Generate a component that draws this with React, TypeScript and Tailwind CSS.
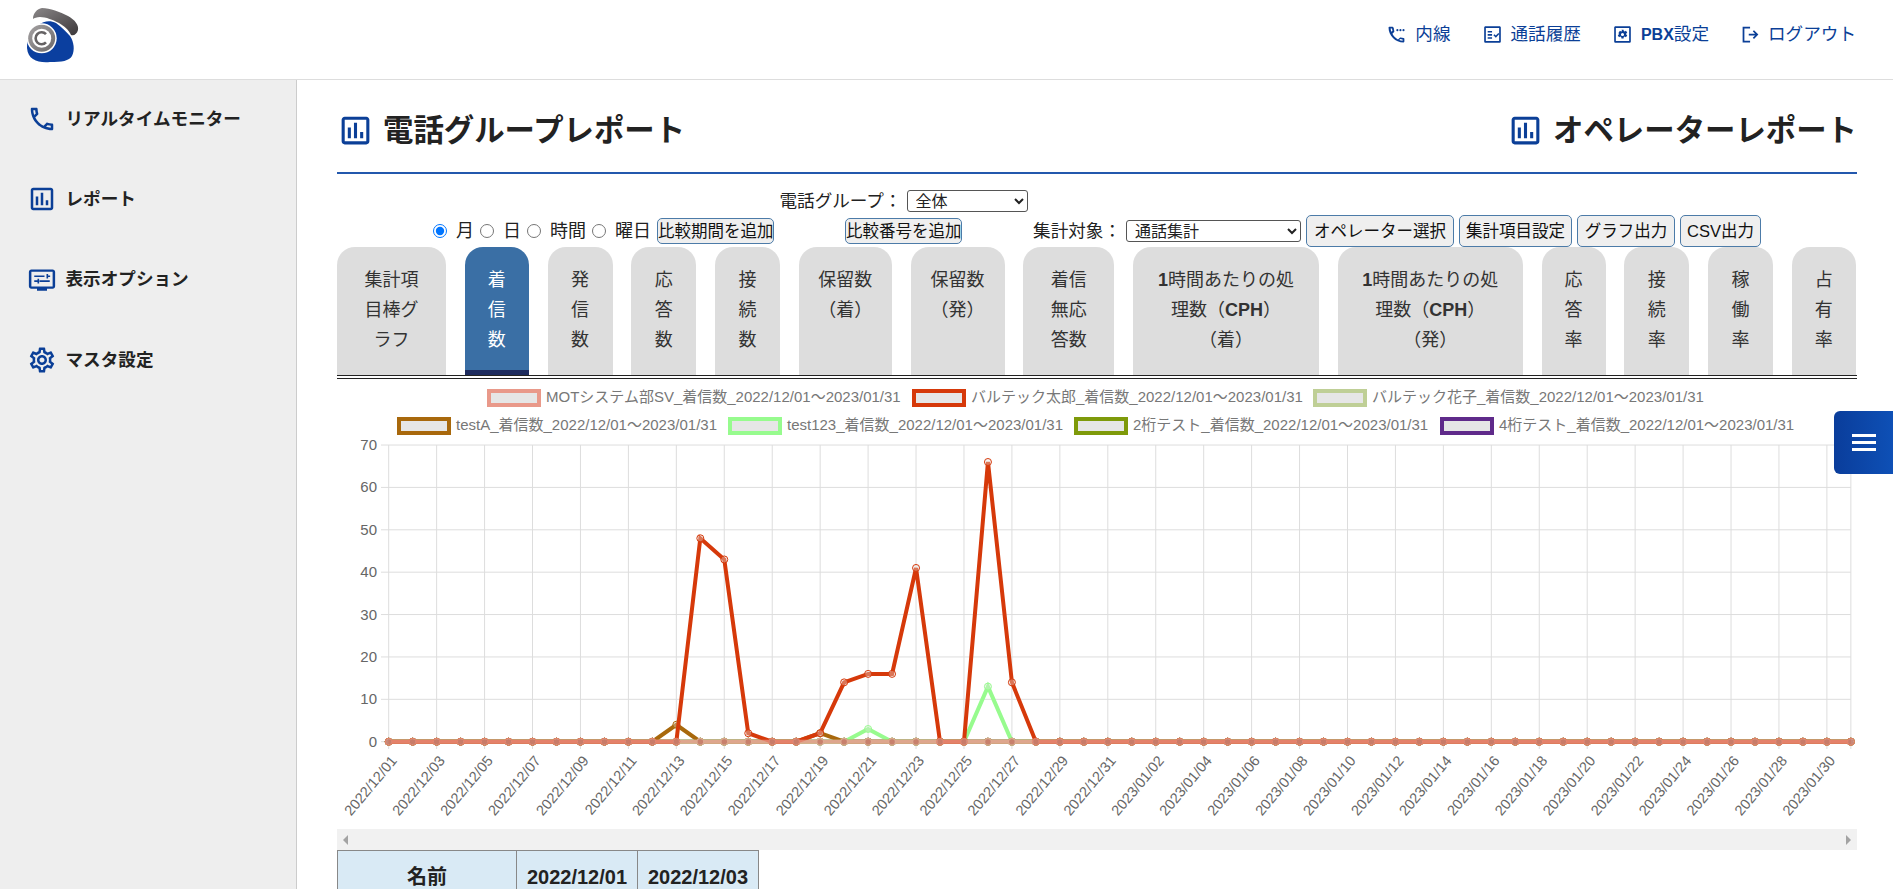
import { ReactNode } from "react";

const BLUE = "#0b3f97";

function Svg({ size, children }: { size: number; children: ReactNode }) {
    return (
        <svg width={size} height={size} viewBox="0 0 24 24" fill={BLUE} className="shrink-0">
            {children}
        </svg>
    );
}

function CallIcon({ size = 30 }: { size?: number }) {
    return (
        <Svg size={size}>
            <path d="M6.54 5c.06.89.21 1.76.45 2.59l-1.2 1.2c-.41-1.2-.67-2.47-.76-3.79h1.51m9.86 12.02c.85.24 1.72.39 2.6.45v1.49c-1.32-.09-2.59-.35-3.8-.75l1.2-1.19M7.5 3H4c-.55 0-1 .45-1 1 0 9.39 7.61 17 17 17 .55 0 1-.45 1-1v-3.49c0-.55-.45-1-1-1-1.24 0-2.45-.2-3.57-.57-.1-.04-.21-.05-.31-.05-.26 0-.51.1-.71.29l-2.2 2.2c-2.83-1.45-5.15-3.76-6.59-6.59l2.2-2.2c.28-.28.36-.67.25-1.02C8.7 6.45 8.5 5.25 8.5 4c0-.55-.45-1-1-1z" />
        </Svg>
    );
}

function ReportIcon({ size = 30 }: { size?: number }) {
    return (
        <Svg size={size}>
            <path d="M19 3H5c-1.1 0-2 .9-2 2v14c0 1.1.9 2 2 2h14c1.1 0 2-.9 2-2V5c0-1.1-.9-2-2-2zm0 16H5V5h14v14z" />
            <path d="M7 10h2v7H7zm4-3h2v10h-2zm4 6h2v4h-2z" />
        </Svg>
    );
}

function DisplayIcon() {
    return (
        <Svg size={30}>
            <path d="M3.500 3.500h17c1.100 0 2 .9 2 2v11.500c0 1.100-.9 2-2 2H16v1.500H8V19H3.500c-1.100 0-2-.9-2-2V5.500c0-1.100.9-2 2-2zm0 1.900v11.700h17V5.400z" />
            <path d="M5.800 8.300h8.200v1.300H5.800zm9.800-1.200h1.300v1.200h1.600v1.300h-1.600v1.200h-1.300zM18.200 12.200v1.300H10v-1.300zM8.400 11h1.300v3.700H8.400v-1.200H5.800v-1.300h2.600z" />
        </Svg>
    );
}

function GearIcon() {
    return (
        <Svg size={30}>
            <path d="M19.43 12.98c.04-.32.07-.64.07-.98 0-.34-.03-.66-.07-.98l2.11-1.65c.19-.15.24-.42.12-.64l-2-3.46c-.09-.16-.26-.25-.44-.25-.06 0-.12.01-.17.03l-2.49 1c-.52-.4-1.08-.73-1.69-.98l-.38-2.65C14.46 2.18 14.25 2 14 2h-4c-.25 0-.46.18-.49.42l-.38 2.65c-.61.25-1.17.59-1.69.98l-2.49-1c-.06-.02-.12-.03-.18-.03-.17 0-.34.09-.43.25l-2 3.46c-.13.22-.07.49.12.64l2.11 1.65c-.04.32-.07.65-.07.98 0 .33.03.66.07.98l-2.11 1.65c-.19.15-.24.42-.12.64l2 3.46c.09.16.26.25.44.25.06 0 .12-.01.17-.03l2.49-1c.52.4 1.08.73 1.69.98l.38 2.65c.03.24.24.42.49.42h4c.25 0 .46-.18.49-.42l.38-2.65c.61-.25 1.17-.59 1.69-.98l2.49 1c.06.02.12.03.18.03.17 0 .34-.09.43-.25l2-3.46c.12-.22.07-.49-.12-.64l-2.11-1.65zm-1.98-1.71c.04.31.05.52.05.73 0 .21-.02.43-.05.73l-.14 1.13.89.7 1.08.84-.7 1.21-1.27-.51-1.04-.42-.9.68c-.43.32-.84.56-1.25.73l-1.06.43-.16 1.13-.2 1.35h-1.4l-.19-1.35-.16-1.13-1.06-.43c-.43-.18-.83-.41-1.23-.71l-.91-.7-1.06.43-1.27.51-.7-1.21 1.08-.84.89-.7-.14-1.13c-.03-.31-.05-.54-.05-.74s.02-.43.05-.73l.14-1.13-.89-.7-1.08-.84.7-1.21 1.27.51 1.04.42.9-.68c.43-.32.84-.56 1.25-.73l1.06-.43.16-1.13.2-1.35h1.39l.19 1.35.16 1.13 1.06.43c.43.18.83.41 1.23.71l.91.7 1.06-.43 1.27-.51.7 1.21-1.07.85-.89.7.14 1.13zM12 8c-2.21 0-4 1.79-4 4s1.79 4 4 4 4-1.79 4-4-1.79-4-4-4zm0 6c-1.1 0-2-.9-2-2s.9-2 2-2 2 .9 2 2-.9 2-2 2z" />
        </Svg>
    );
}

function LineIcon() {
    return (
        <Svg size={21}>
            <path d="M6.9 3H3.8c-.5 0-.9.4-.9.9C2.900 13.300 10.700 21 20.100 21c.5 0 .9-.4.9-.9v-3.300c0-.5-.4-.9-.9-.9-1.200 0-2.300-.2-3.400-.5-.3-.1-.7 0-.9.2l-2.100 2.100C11 16.100 8.700 13.800 7.300 11.100l2-2.100c.3-.3.3-.6.2-.9C9.100 7 8.900 5.900 8.900 4.700 8.900 3.700 7.900 3 6.900 3zM5.300 5h1.600c.1 1 .2 1.900.5 2.700L6.200 8.900C5.700 7.700 5.400 6.400 5.300 5zm11 12.100c.9.300 1.800.4 2.700.5v1.600c-1.400-.1-2.700-.4-3.900-.8z" />
            <circle cx="13" cy="7" r="1.200" />
            <circle cx="16.500" cy="7" r="1.200" />
            <circle cx="20" cy="7" r="1.200" />
        </Svg>
    );
}

function HistoryIcon() {
    return (
        <Svg size={21}>
            <path d="M4 2.500h16c.8 0 1.500.7 1.500 1.500v16c0 .8-.7 1.500-1.500 1.500H4c-.8 0-1.500-.7-1.500-1.500V4c0-.8.7-1.500 1.500-1.500zm.4 2v15h15.200v-15z" />
            <path d="M6.500 8h5v1.800h-5zm0 3.500h5v1.800h-5zm0 3.500h5v1.800h-5z" />
            <path d="M13 12.800l1.200-1.200 1.600 1.600 2.800-3 1.200 1.200-4 4.200z" />
        </Svg>
    );
}

function PbxIcon() {
    return (
        <Svg size={21}>
            <path d="M4 2.500h16c.8 0 1.500.7 1.500 1.500v16c0 .8-.7 1.500-1.500 1.500H4c-.8 0-1.500-.7-1.500-1.500V4c0-.8.7-1.500 1.500-1.500zm.4 2v15h15.200v-15z" />
            <path fillRule="evenodd" d="M10.800 6.500h2.400l.3 1.500 1.100.5 1.300-.8 1.500 2-1.100 1.100v1.300l1.100 1.100-1.500 2-1.300-.8-1.100.5-.3 1.600h-2.400l-.3-1.600-1.100-.5-1.300.8-1.500-2 1.100-1.100v-1.300L7.600 9.700l1.500-2 1.300.8 1.100-.5zM12 10.200a1.800 1.800 0 100 3.600 1.800 1.800 0 000-3.600z" />
        </Svg>
    );
}

function LogoutIcon() {
    return (
        <Svg size={21}>
            <path d="M3 3h8.500v2H5v14h6.500v2H3z" />
            <path d="M10 11h7.200l-2.600-2.600L16 7l5 5-5 5-1.400-1.400 2.600-2.600H10z" />
        </Svg>
    );
}

function Logo() {
    return (
        <svg width="54" height="56" viewBox="25 8 54 56" className="shrink-0 self-start mt-[8px]">
            <defs>
                <linearGradient id="handset" x1="0" y1="0" x2="1" y2="1">
                    <stop offset="0" stopColor="#8a8788" />
                    <stop offset="1" stopColor="#3c383a" />
                </linearGradient>
                <linearGradient id="ring" x1="0" y1="0" x2="1" y2="1">
                    <stop offset="0" stopColor="#a5a2a3" />
                    <stop offset="1" stopColor="#6b6869" />
                </linearGradient>
            </defs>
            <path d="M27 48C27 38 31 30 38 25C44 21 50 20 56 23C62 27 66 32 70 36C74 42 75 50 72 56C69 61 62 62 50 62C38 63 28 60 27 48Z" fill="#0b3f9f" />
            <path d="M33 19C33 13 37 9 42 8C50 8 60 12 68 16C75 20 79 25 78 30C77 34 74 36 71 35C69 30 64 26 59 23C53 20 46 17 40 17C37 17 34 18 33 19Z" fill="url(#handset)" />
            <circle cx="41.700" cy="38.300" r="15" fill="#fff" />
            <circle cx="41.700" cy="38.300" r="13.500" fill="url(#ring)" />
            <circle cx="41.700" cy="38.300" r="9.500" fill="#fff" />
            <path d="M46 34.200a6 6 0 100 8.200" fill="none" stroke="#656263" strokeWidth="2.600" />
        </svg>
    );
}

const headerLinks = [
    { icon: <LineIcon />, label: <>内線</>, gap: "gap-[8px]" },
    { icon: <HistoryIcon />, label: <>通話履歴</>, gap: "gap-[8px]" },
    { icon: <PbxIcon />, label: <><span className="font-bold text-[16px]">PBX</span>設定</>, gap: "gap-[8px]" },
    { icon: <LogoutIcon />, label: <>ログアウト</>, gap: "gap-[7px]" },
];

const navItems = [
    { icon: <CallIcon />, label: "リアルタイムモニター" },
    { icon: <ReportIcon />, label: "レポート" },
    { icon: <DisplayIcon />, label: "表示オプション" },
    { icon: <GearIcon />, label: "マスタ設定" },
];

const tabs: { width: string; lines: ReactNode[]; active?: boolean }[] = [
    { width: "w-[109px]", lines: ["集計項", "目棒グ", "ラフ"] },
    { width: "w-[64px]", lines: ["着", "信", "数"], active: true },
    { width: "w-[65px]", lines: ["発", "信", "数"] },
    { width: "w-[65px]", lines: ["応", "答", "数"] },
    { width: "w-[65px]", lines: ["接", "続", "数"] },
    { width: "w-[93px]", lines: ["保留数", "（着）"] },
    { width: "w-[94px]", lines: ["保留数", "（発）"] },
    { width: "w-[91px]", lines: ["着信", "無応", "答数"] },
    { width: "w-[186px]", lines: [<><span className="font-bold">1</span>時間あたりの処</>, <>理数（<span className="font-bold">CPH</span>）</>, "（着）"] },
    { width: "w-[185px]", lines: [<><span className="font-bold">1</span>時間あたりの処</>, <>理数（<span className="font-bold">CPH</span>）</>, "（発）"] },
    { width: "w-[64px]", lines: ["応", "答", "率"] },
    { width: "w-[65px]", lines: ["接", "続", "率"] },
    { width: "w-[65px]", lines: ["稼", "働", "率"] },
    { width: "w-[64px]", lines: ["占", "有", "率"] },
];

const RANGE = "2022/12/01～2023/01/31";

// drawn in reverse, the first dataset ends up on top like chart.js does it
const series: { name: string; color: string; data: Record<number, number>; box: number[]; opacity?: number }[] = [
    { name: "MOTシステム部SV", color: "#e9998a", data: {}, box: [487, 393], opacity: 0.75 },
    { name: "バルテック太郎", color: "#d6390a", data: { 13: 48, 14: 43, 15: 2, 18: 2, 19: 14, 20: 16, 21: 16, 22: 41, 25: 66, 26: 14 }, box: [912, 393] },
    { name: "バルテック花子", color: "#bfcf96", data: {}, box: [1313, 393] },
    { name: "testA", color: "#a8680c", data: { 12: 4, 18: 2 }, box: [397, 421] },
    { name: "test123", color: "#97fb8e", data: { 20: 3, 25: 13 }, box: [728, 421] },
    { name: "2桁テスト", color: "#7e9a0a", data: {}, box: [1074, 421] },
    { name: "4桁テスト", color: "#5f2a8a", data: {}, box: [1440, 421] },
];

const X0 = 388.7;
const XSTEP = 23.97;
const Y0 = 741.7;
const YSTEP = 4.238;
const px = (i: number) => X0 + i * XSTEP;
const py = (v: number) => Y0 - v * YSTEP;

function dateLabel(i: number) {
    const d = new Date(Date.UTC(2022, 11, 1 + i));
    const mm = String(d.getUTCMonth() + 1).padStart(2, "0");
    const dd = String(d.getUTCDate()).padStart(2, "0");
    return `${d.getUTCFullYear()}/${mm}/${dd}`;
}

function Chart() {
    const days = Array.from({ length: 62 }, (_, i) => i);
    const even = days.filter((i) => i % 2 === 0);
    const yTicks = [0, 10, 20, 30, 40, 50, 60, 70];

    return (
        <svg width="1520" height="449" viewBox="337 380 1520 449" className="block mt-[1px]">
            {series.map((s) => (
                <g key={s.name}>
                    <rect x={s.box[0] + 2} y={s.box[1] - 2} width="50" height="14" fill="#e6e6e6" stroke={s.color} strokeWidth="4" />
                    <text x={s.box[0] + 59} y={s.box[1] + 9} fontSize="15" fill="#777">
                        {`${s.name}_着信数_${RANGE}`}
                    </text>
                </g>
            ))}

            {yTicks.map((v) => (
                <g key={v}>
                    <line x1={381} x2={px(61)} y1={py(v)} y2={py(v)} stroke="#ddd" strokeWidth="1" />
                    <text x={377} y={py(v) + 5} fontSize="15" fill="#666" textAnchor="end">{v}</text>
                </g>
            ))}
            {even.map((i) => (
                <g key={i}>
                    <line x1={px(i)} x2={px(i)} y1={py(70)} y2={749} stroke="#ddd" strokeWidth="1" />
                    <text x={px(i) + 9} y={761} fontSize="14.500" fill="#666" textAnchor="end" transform={`rotate(-50 ${px(i) + 9} 761)`}>
                        {dateLabel(i)}
                    </text>
                </g>
            ))}
            <line x1={px(61)} x2={px(61)} y1={py(70)} y2={749} stroke="#ddd" strokeWidth="1" />

            {[...series].reverse().map((s) => (
                <g key={s.name} opacity={s.opacity ?? 1}>
                    <polyline
                        points={days.map((i) => `${px(i)},${py(s.data[i] ?? 0)}`).join(" ")}
                        fill="none"
                        stroke={s.color}
                        strokeWidth="4"
                        strokeLinejoin="miter"
                    />
                    {days.map((i) => (
                        <circle key={i} cx={px(i)} cy={py(s.data[i] ?? 0)} r="3.500" fill="#e6e6e6" fillOpacity="0.35" stroke={s.color} strokeWidth="1" />
                    ))}
                </g>
            ))}
            {days.map((i) => (
                <circle key={i} cx={px(i)} cy={Y0} r="2.800" fill="#c2705c" fillOpacity="0.8" />
            ))}
        </svg>
    );
}

function ToolButton({ children, className }: { children: ReactNode; className: string }) {
    return (
        <button className={`border border-[#4c7ba8] rounded-[5px] bg-[#efefef] text-[16.500px] text-[#111] whitespace-nowrap ${className}`}>
            {children}
        </button>
    );
}

function Radio({ label, checked }: { label: string; checked?: boolean }) {
    return (
        <label className="flex items-center gap-[9px] text-[18px]">
            <input type="radio" name="unit" defaultChecked={checked} className="w-[14px] h-[14px]" />
            <span>{label}</span>
        </label>
    );
}

function Toolbar() {
    return (
        <div className="flex justify-center items-end gap-[5.500px] mt-[16px] text-[17.600px] text-[#222]">
            <div className="flex items-center gap-[6px] h-[26px] mb-[3px]">
                <Radio label="月" checked />
                <Radio label="日" />
                <Radio label="時間" />
                <Radio label="曜日" />
                <ToolButton className="w-[117px] h-[26px] leading-none">比較期間を追加</ToolButton>
            </div>
            <div className="flex flex-col items-center gap-[6px] mb-[3px]">
                <div className="flex items-center h-[22px]">
                    <span className="whitespace-nowrap">電話グループ：</span>
                    <select className="w-[121px] h-[22px] border border-[#555] rounded-[3px] bg-white text-[16px] ml-[5px] pl-[4px]">
                        <option>全体</option>
                    </select>
                </div>
                <ToolButton className="w-[117px] h-[26px] leading-none">比較番号を追加</ToolButton>
            </div>
            <div className="flex items-center gap-[5px] h-[32px]">
                <span className="whitespace-nowrap">集計対象：</span>
                <select className="w-[175px] h-[22px] border border-[#555] rounded-[3px] bg-white text-[16px] pl-[4px]">
                    <option>通話集計</option>
                </select>
                <ToolButton className="h-[32px] w-[148px]">オペレーター選択</ToolButton>
                <ToolButton className="h-[32px] w-[113px]">集計項目設定</ToolButton>
                <ToolButton className="h-[32px] w-[98px]">グラフ出力</ToolButton>
                <ToolButton className="h-[32px] w-[81px]">CSV出力</ToolButton>
            </div>
        </div>
    );
}

export default function App() {
    return (
        <div className="relative flex flex-col h-[889px] overflow-hidden bg-white text-[17.600px] text-[#222] [font-family:'Liberation_Sans','Noto_Sans_CJK_JP',sans-serif]">
            <header className="flex items-center justify-between h-[80px] shrink-0 border-b border-[#ddd] pl-[25px] pr-[37px]">
                <Logo />
                <nav className="flex items-center gap-[31px] mb-[10px]" style={{ color: BLUE }}>
                    {headerLinks.map((l, i) => (
                        <a key={i} className={`flex items-center whitespace-nowrap ${l.gap}`}>
                            {l.icon}
                            <span>{l.label}</span>
                        </a>
                    ))}
                </nav>
            </header>

            <div className="flex flex-1 min-h-0">
                <aside className="w-[297px] shrink-0 bg-[#eee] border-r border-[#ccc] pt-[19px] pl-[27px]">
                    <ul className="flex flex-col gap-[40.300px]">
                        {navItems.map((n) => (
                            <li key={n.label} className="flex items-center gap-[8.500px] h-[40px] font-bold">
                                {n.icon}
                                <span>{n.label}</span>
                            </li>
                        ))}
                    </ul>
                </aside>

                <main className="flex-1 min-w-0 pl-[40px] pr-[36px]">
                    <div className="flex items-center justify-between h-[94px] pt-[10px] border-b-2 border-[#2358ad] text-[30.400px] font-bold">
                        <h1 className="flex items-center gap-[9px]"><ReportIcon size={37} />電話グループレポート</h1>
                        <h2 className="flex items-center gap-[9px]"><ReportIcon size={37} />オペレーターレポート</h2>
                    </div>

                    <Toolbar />

                    <div className="flex gap-[18.750px] border-b border-[#222]">
                        {tabs.map((t, i) => (
                            <div
                                key={i}
                                className={`${t.width} h-[128px] shrink-0 rounded-t-[18px] pt-[18px] text-center text-[18px] leading-[30px] ${t.active ? "bg-[#3a6fa5] text-white border-b-[5px] border-[#1d2b5e]" : "bg-[#ddd] text-[#333]"}`}
                            >
                                {t.lines.map((line, j) => (
                                    <div key={j}>{line}</div>
                                ))}
                            </div>
                        ))}
                    </div>
                    <div className="mt-[2px] border-t border-[#222]" />

                    <Chart />

                    <div className="flex items-center justify-between h-[21px] px-[6px] bg-[#f1f1f1]">
                        <span className="border-y-[5px] border-r-[5px] border-y-transparent border-r-[#a3a3a3]" />
                        <span className="border-y-[5px] border-l-[5px] border-y-transparent border-l-[#a3a3a3]" />
                    </div>

                    <table className="border-collapse text-[20px] font-bold text-[#222]">
                        <thead>
                            <tr className="h-[52px] bg-[#d9eaf5]">
                                <th className="w-[179px] border border-[#888]">名前</th>
                                <th className="w-[121px] border border-[#888]">2022/12/01</th>
                                <th className="w-[121px] border border-[#888]">2022/12/03</th>
                            </tr>
                        </thead>
                    </table>
                </main>
            </div>

            <button className="absolute top-[411px] right-0 flex flex-col items-center justify-center gap-[4px] w-[59px] h-[63px] rounded-l-[6px] bg-gradient-to-r from-[#0a3d9b] to-[#0e50b6]">
                <span className="block w-[24px] h-[3px] bg-white" />
                <span className="block w-[24px] h-[3px] bg-white" />
                <span className="block w-[24px] h-[3px] bg-white" />
            </button>
        </div>
    );
}
